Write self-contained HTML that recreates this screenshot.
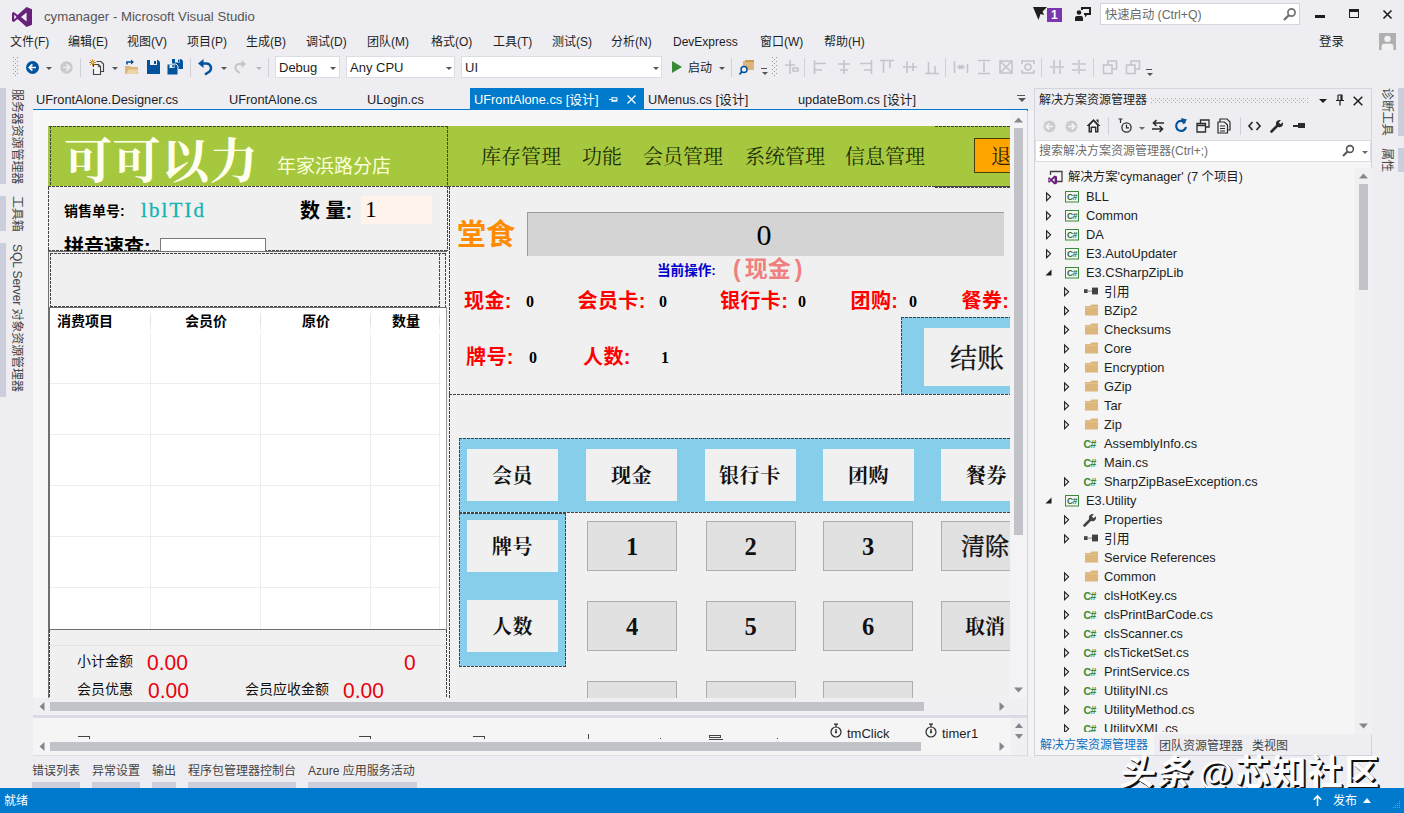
<!DOCTYPE html>
<html lang="zh-CN">
<head>
<meta charset="utf-8">
<title>cymanager - Microsoft Visual Studio</title>
<style>
*{box-sizing:border-box;margin:0;padding:0}
html,body{width:1404px;height:813px;overflow:hidden;background:#eeeef2}
body{font-family:"Liberation Sans","Noto Sans CJK SC",sans-serif;font-size:12px;color:#1e1e1e;position:relative}
.a{position:absolute;white-space:nowrap}
.sf{font-family:"Liberation Serif","Noto Serif CJK SC",serif}
.t{position:absolute;white-space:nowrap;line-height:1;transform:translateY(-50%)}
.b{font-weight:bold}
svg{position:absolute;overflow:visible}
/* ---------- title / menu / toolbar ---------- */
#title{left:44px;top:16.7px;font-size:13.2px;color:#555}
.menu{top:42px;font-size:12px;color:#1e1e1e}
.sep{position:absolute;width:1px;background:#cfd0d8;top:58px;height:19px}
.combo{position:absolute;top:56px;height:22px;background:#fff;border:1px solid #dcdde3}
.combo span{position:absolute;left:3px;top:3px;font-size:13px;color:#1e1e1e;line-height:15px}
.dn{position:absolute;width:0;height:0;border-left:3px solid transparent;border-right:3px solid transparent;border-top:3px solid #6a6a6a;margin:0.5px 0 0 0.5px}
/* ---------- doc tabs ---------- */
.tab{top:99.5px;font-size:12.8px;color:#1e1e1e}
/* ---------- designer ---------- */
#des{position:absolute;left:33px;top:110px;width:993px;height:605px;background:#f5f5f5}
#view{position:absolute;left:0;top:0;width:977px;height:588px;overflow:hidden;background:#f7f7f7}
#form{position:absolute;left:15px;top:16px;width:1100px;height:700px;background:#f0f0f0}
.dash{position:absolute;border:1px dashed #555}
.red{color:#f00;font-weight:bold;font-size:20px;letter-spacing:0.4px}
.val{font-family:"Liberation Serif","Noto Serif CJK SC",serif;font-size:16px;color:#000;font-weight:bold}
.pbtn{position:absolute;background:#f0f0f0;font-family:"Liberation Serif","Noto Serif CJK SC",serif;font-weight:bold;font-size:20px;color:#111;text-align:center}
.nbtn{position:absolute;background:#e1e1e1;border:1px solid #adadad;font-family:"Liberation Serif","Noto Serif CJK SC",serif;font-weight:bold;font-size:24.5px;color:#111;text-align:center;width:90px;height:50px;line-height:50px}

.hd{position:absolute;height:1px;background:repeating-linear-gradient(90deg,#444 0 3px,transparent 3px 4px)}
.vd{position:absolute;width:1px;background:repeating-linear-gradient(180deg,#444 0 3px,transparent 3px 4px)}
.sky{position:absolute;background:#87ceeb}
/* ---------- solution explorer ---------- */
#sol{position:absolute;left:1034px;top:90px;width:338px;height:644px}
.tr{position:absolute;left:0;height:19px;font-size:12.8px;color:#1e1e1e;white-space:nowrap;line-height:19px}

.vt{writing-mode:vertical-rl;text-orientation:sideways;font-size:12px;color:#444;line-height:14px;letter-spacing:-0.1px}
#wm{font-size:35px;font-weight:700;color:#fdfdfd;letter-spacing:0.6px;text-shadow:1px 1px 0 #111,2px 2px 0 #111,0 0 1px #bbb}
.gs{font-family:"Liberation Serif","Noto Serif CJK SC",serif;font-size:500px}
.gw{font-family:"Liberation Sans","Noto Sans CJK SC",sans-serif;font-size:500px;font-weight:bold}
</style>
</head>
<body>
<!-- TITLE BAR -->
<svg style="left:11px;top:6px" width="22" height="22" viewBox="0 0 22 22"><path d="M15.5 1 L21 3.3 V18.7 L15.5 21 L6.6 12.9 L2.8 15.9 L1 15 V7 L2.8 6.1 L6.6 9.1 Z M3.2 8.6 V13.4 L5.6 11 Z M10 11 L15.6 15.4 V6.6 Z" fill="#68217a" fill-rule="evenodd"/></svg>
<div class="t" id="title">cymanager - Microsoft Visual Studio</div>
<svg style="left:1032.5px;top:7px" width="14" height="13" viewBox="0 0 14 13"><path d="M0 0 H14 L9.5 4.5 L11 8 L7.5 7 L5.5 13 Z" fill="#1e1e1e"/></svg>
<div class="a" style="left:1047px;top:7.5px;width:14.5px;height:14px;background:#7a35b0;color:#fff;font-size:12px;font-weight:bold;text-align:center;line-height:15px">1</div>
<svg style="left:1075px;top:7px" width="16" height="15" viewBox="0 0 16 15"><path d="M6 0 H16 V8 H12 L10 10.5 V8 H9 V6 H14 V2 H8 V3 H6 Z" fill="#1e1e1e"/><circle cx="4" cy="5.5" r="2.3" fill="#1e1e1e"/><path d="M0 14 V11 Q0 9 2 9 H6 Q8 9 8 11 V14 Z" fill="#1e1e1e"/></svg>
<div class="a" style="left:1100px;top:3px;width:200px;height:22px;background:#fff;border:1px solid #d4d5de"></div>
<div class="t" style="left:1105px;top:15px;font-size:12.3px;color:#6a6a6a">快速启动 (Ctrl+Q)</div>
<svg style="left:1282px;top:7px" width="15" height="15" viewBox="0 0 15 15"><circle cx="9.5" cy="5.5" r="3.6" fill="none" stroke="#717171" stroke-width="1.7"/><path d="M6.8 8.2 L2 13" stroke="#717171" stroke-width="2.3"/></svg>
<div class="a" style="left:1315px;top:15px;width:10px;height:3px;background:#1e1e1e"></div>
<div class="a" style="left:1349px;top:9px;width:10px;height:9px;border:1px solid #1e1e1e;border-top-width:3px"></div>
<svg style="left:1382.5px;top:9.5px" width="9" height="9" viewBox="0 0 9 9"><path d="M0.5 0.5 L8.5 8.5 M8.5 0.5 L0.5 8.5" stroke="#1e1e1e" stroke-width="1.6"/></svg>
<div class="t" style="left:1319px;top:42px;font-size:12.5px">登录</div>
<svg style="left:1379px;top:33px" width="17" height="17" viewBox="0 0 16 16"><rect width="16" height="16" fill="#b0b0b0"/><circle cx="8" cy="5.5" r="3" fill="#f2f2f2"/><path d="M2.5 16 V12.5 Q2.5 10 5 10 H11 Q13.5 10 13.5 12.5 V16 Z" fill="#f2f2f2"/></svg>
<!-- MENU -->
<div class="t menu" style="left:10px">文件(F)</div>
<div class="t menu" style="left:68px">编辑(E)</div>
<div class="t menu" style="left:127px">视图(V)</div>
<div class="t menu" style="left:187px">项目(P)</div>
<div class="t menu" style="left:246px">生成(B)</div>
<div class="t menu" style="left:306px">调试(D)</div>
<div class="t menu" style="left:367px">团队(M)</div>
<div class="t menu" style="left:431px">格式(O)</div>
<div class="t menu" style="left:493px">工具(T)</div>
<div class="t menu" style="left:552px">测试(S)</div>
<div class="t menu" style="left:611px">分析(N)</div>
<div class="t menu" style="left:673px">DevExpress</div>
<div class="t menu" style="left:760px">窗口(W)</div>
<div class="t menu" style="left:824px">帮助(H)</div>

<!-- TOOLBAR -->
<svg style="left:13px;top:57px" width="5" height="20"><defs><pattern id="g13" width="4" height="4" patternUnits="userSpaceOnUse"><rect x="0" y="0" width="1" height="1" fill="#999"/><rect x="2" y="2" width="1" height="1" fill="#999"/></pattern></defs><rect width="5" height="20" fill="url(#g13)"/></svg>
<svg style="left:25.5px;top:60.5px" width="13" height="13" viewBox="0 0 13 13"><circle cx="6.5" cy="6.5" r="6.5" fill="#00539c"/><path d="M10 6.5 H3.6 M6.4 3.4 L3.3 6.5 L6.4 9.6" fill="none" stroke="#fff" stroke-width="1.7"/></svg>
<div class="dn" style="left:45px;top:66px;border-top-color:#555"></div>
<svg style="left:60px;top:60.5px" width="13" height="13" viewBox="0 0 13 13"><circle cx="6.5" cy="6.5" r="6.2" fill="#c9c9ce"/><path d="M3 6.5 H9.4 M6.6 3.4 L9.7 6.5 L6.6 9.6" fill="none" stroke="#eeeef2" stroke-width="1.7"/></svg>
<div class="sep" style="left:80px"></div>
<svg style="left:89px;top:59px" width="16" height="16" viewBox="0 0 16 16"><path d="M7.5 2.5 H12 L14.5 5 V12.5 H12" fill="none" stroke="#424242" stroke-width="1.1"/><path d="M4.5 8 V5.5 H9.5 L11.5 7.5 V15.5 H4.5 V10" fill="#f5f5f5" stroke="#424242" stroke-width="1.1"/><path d="M9.3 5.5 V7.7 H11.5" fill="none" stroke="#424242" stroke-width="0.9"/><path d="M3.5 0.3 V6.7 M0.3 3.5 H6.7 M1.3 1.3 L5.7 5.7 M5.7 1.3 L1.3 5.7" stroke="#c27d1a" stroke-width="1"/><circle cx="3.5" cy="3.5" r="1.2" fill="#f0c060"/></svg>
<div class="dn" style="left:111px;top:66px;border-top-color:#555"></div>
<svg style="left:123px;top:59px" width="16" height="16" viewBox="0 0 16 16"><path d="M2 7 H7 L8 8 H15 V15 H2 Z" fill="#dcb67a"/><path d="M3.5 15 L5.5 10.5 H15.5 L14 15 Z" fill="#efd5a5"/><path d="M4 5.5 V3 H9" fill="none" stroke="#00539c" stroke-width="1.6"/><path d="M8 0.5 L11 3 L8 5.5 Z" fill="#00539c"/></svg>
<svg style="left:147px;top:60px" width="13" height="14" viewBox="0 0 13 14"><path d="M0 0 H11 L13 2 V14 H0 Z" fill="#00539c"/><rect x="3" y="0" width="7" height="5" fill="#eeeef2"/><rect x="7" y="1" width="2" height="3" fill="#00539c"/><rect x="2.5" y="8" width="8" height="6" fill="#00539c"/></svg>
<svg style="left:167px;top:59px" width="16" height="16" viewBox="0 0 16 16"><path d="M5 0 H14 L16 2 V10 H5 Z" fill="#00539c"/><rect x="8" y="0" width="5" height="3.5" fill="#eeeef2"/><rect x="11" y="0.6" width="1.5" height="2.3" fill="#00539c"/><path d="M0 5 H9 L11 7 V16 H0 Z" fill="#00539c" stroke="#eeeef2" stroke-width="1"/><rect x="2.5" y="5.5" width="5" height="3.5" fill="#eeeef2"/><rect x="5.3" y="6" width="1.5" height="2.3" fill="#00539c"/></svg>
<div class="sep" style="left:190px"></div>
<svg style="left:198px;top:59px" width="15" height="16" viewBox="0 0 15 16"><path d="M3.5 4.5 H8.5 A4.6 4.6 0 0 1 11.5 12.5 L7 15.5" fill="none" stroke="#00539c" stroke-width="2.4"/><path d="M0 4.5 L5.5 0 V9 Z" fill="#00539c"/></svg>
<div class="dn" style="left:220px;top:66px;border-top-color:#555"></div>
<svg style="left:233px;top:60px" width="13" height="14" viewBox="0 0 13 14"><path d="M10 4 H6 A3.8 3.8 0 0 0 3.5 10.5 L7 13" fill="none" stroke="#c3c3c8" stroke-width="2"/><path d="M13 4 L8.5 0 V8 Z" fill="#c3c3c8"/></svg>
<div class="dn" style="left:255px;top:66px;border-top-color:#b5b5bb"></div>
<div class="sep" style="left:268px"></div>
<div class="combo" style="left:275px;width:65px"><span>Debug</span></div><div class="dn" style="left:329px;top:66px;border-top-color:#555"></div>
<div class="combo" style="left:346px;width:109px"><span>Any CPU</span></div><div class="dn" style="left:445px;top:66px;border-top-color:#555"></div>
<div class="combo" style="left:461px;width:201px"><span>UI</span></div><div class="dn" style="left:652px;top:66px;border-top-color:#555"></div>
<svg style="left:672px;top:61px" width="10" height="12" viewBox="0 0 10 12"><path d="M0 0 L10 6 L0 12 Z" fill="#388a34"/></svg>
<div class="t" style="left:688px;top:67.6px;font-size:12px">启动</div>
<div class="dn" style="left:718px;top:66px;border-top-color:#555"></div>
<div class="sep" style="left:731px"></div>
<svg style="left:739px;top:59px" width="16" height="16" viewBox="0 0 16 16"><rect x="4" y="2" width="11" height="9" fill="#dcb67a"/><rect x="6" y="1" width="9" height="2" fill="#c89b4e"/><circle cx="5" cy="10.5" r="3" fill="#eeeef2" stroke="#00539c" stroke-width="1.5"/><path d="M3 12.5 L0.5 15.5" stroke="#00539c" stroke-width="1.8"/></svg>
<div class="a" style="left:761px;top:68px;width:6px;height:1px;background:#555"></div><div class="dn" style="left:761px;top:71px;border-top-color:#555"></div>
<svg style="left:772px;top:57px" width="5" height="20"><defs><pattern id="g772" width="4" height="4" patternUnits="userSpaceOnUse"><rect x="0" y="0" width="1" height="1" fill="#999"/><rect x="2" y="2" width="1" height="1" fill="#999"/></pattern></defs><rect width="5" height="20" fill="url(#g772)"/></svg>
<svg style="left:784px;top:59px" width="16" height="16" viewBox="0 0 16 16" fill="none" stroke="#c3c4cc" stroke-width="1.6"><path d="M6 1 V15 M1 6 H11 M9 9 H14 V12 H9 Z"/></svg>
<div class="sep" style="left:804px"></div>
<svg style="left:813px;top:59px" width="16" height="16" viewBox="0 0 16 16" fill="none" stroke="#c3c4cc" stroke-width="1.6"><path d="M1.5 1 V15 M1.5 4.5 H13 M1.5 11 H9"/></svg>
<svg style="left:836px;top:59px" width="16" height="16" viewBox="0 0 16 16" fill="none" stroke="#c3c4cc" stroke-width="1.6"><path d="M8 1 V15 M2 5 H14 M4 11 H12"/></svg>
<svg style="left:857px;top:59px" width="16" height="16" viewBox="0 0 16 16" fill="none" stroke="#c3c4cc" stroke-width="1.6"><path d="M14.5 1 V15 M3 4.5 H14.5 M7 11 H14.5"/></svg>
<svg style="left:879px;top:59px" width="16" height="16" viewBox="0 0 16 16" fill="none" stroke="#c3c4cc" stroke-width="1.6"><path d="M1 1.5 H15 M4.5 1.5 V14 M11 1.5 V9"/></svg>
<svg style="left:902px;top:59px" width="16" height="16" viewBox="0 0 16 16" fill="none" stroke="#c3c4cc" stroke-width="1.6"><path d="M1 8 H15 M5 2 V14 M11 4 V12"/></svg>
<svg style="left:924px;top:59px" width="16" height="16" viewBox="0 0 16 16" fill="none" stroke="#c3c4cc" stroke-width="1.6"><path d="M1 14.5 H15 M4.5 3 V14.5 M11 7 V14.5"/></svg>
<div class="sep" style="left:945px"></div>
<svg style="left:953px;top:59px" width="16" height="16" viewBox="0 0 16 16" fill="none" stroke="#c3c4cc" stroke-width="1.6"><path d="M1.5 2 V14 M14.5 5 V14 M4 8 H12 M6 6 L10 10 M10 6 L6 10"/></svg>
<svg style="left:976px;top:59px" width="16" height="16" viewBox="0 0 16 16" fill="none" stroke="#c3c4cc" stroke-width="1.6"><path d="M2 1.5 H14 M2 14.5 H14 M8 3 V13"/></svg>
<svg style="left:998px;top:59px" width="16" height="16" viewBox="0 0 16 16" fill="none" stroke="#c3c4cc" stroke-width="1.6"><path d="M2 2 H14 V14 H2 Z M2 2 L14 14 M14 2 L2 14"/></svg>
<svg style="left:1020px;top:59px" width="16" height="16" viewBox="0 0 16 16" fill="none" stroke="#c3c4cc" stroke-width="1.6"><circle cx="8" cy="8" r="3"/><path d="M2 5 V2 H14 V5 M2 11 V14 H14 V11"/></svg>
<div class="sep" style="left:1041px"></div>
<svg style="left:1049px;top:59px" width="16" height="16" viewBox="0 0 16 16" fill="none" stroke="#c3c4cc" stroke-width="1.6"><path d="M5 1 V15 M11 1 V15 M1 8 H4 M6 8 H10 M12 8 H15"/></svg>
<svg style="left:1071px;top:59px" width="16" height="16" viewBox="0 0 16 16" fill="none" stroke="#c3c4cc" stroke-width="1.6"><path d="M1 5 H15 M1 11 H15 M8 1 V4 M8 6 V10 M8 12 V15"/></svg>
<div class="sep" style="left:1093px"></div>
<svg style="left:1102px;top:59px" width="16" height="16" viewBox="0 0 16 16" fill="none" stroke="#c3c4cc" stroke-width="1.6"><path d="M1.5 6 H10 V14.5 H1.5 Z M6 6 V2 H14.5 V10 H10"/></svg>
<svg style="left:1125px;top:59px" width="16" height="16" viewBox="0 0 16 16" fill="none" stroke="#c3c4cc" stroke-width="1.6"><path d="M1.5 6 H10 V14.5 H1.5 Z M6 6 V2 H14.5 V10 H10"/></svg>
<div class="a" style="left:1146px;top:69px;width:6px;height:1px;background:#555"></div><div class="dn" style="left:1146px;top:72px;border-top-color:#555"></div>
<!-- DOC TABS -->
<div class="a" style="left:33px;top:109px;width:995px;height:2px;background:#007acc"></div>
<div class="a" style="left:470px;top:88px;width:174px;height:22px;background:#007acc"></div>
<div class="t tab" style="left:36px;">UFrontAlone.Designer.cs</div>
<div class="t tab" style="left:229px;">UFrontAlone.cs</div>
<div class="t tab" style="left:367px;">ULogin.cs</div>
<div class="t tab" style="left:474px;color:#fff">UFrontAlone.cs [设计]</div>
<div class="t tab" style="left:648px;">UMenus.cs [设计]</div>
<div class="t tab" style="left:798px;">updateBom.cs [设计]</div>
<svg style="left:609px;top:95px" width="9" height="9" viewBox="0 0 9 9"><path d="M0 4.5 H3 M3 2 V7 M3 2.8 H8 M3 5.4 H8 M3 6.2 H8 M8 2.8 V6.2" stroke="#fff" stroke-width="1" fill="none"/></svg>
<svg style="left:627px;top:95px" width="9" height="9" viewBox="0 0 9 9"><path d="M0.5 0.5 L8.5 8.5 M8.5 0.5 L0.5 8.5" stroke="#fff" stroke-width="1.3"/></svg>
<div class="a" style="left:1017px;top:95px;width:8px;height:1px;background:#555"></div><div class="dn" style="left:1017px;top:97px;border-width:4px 4px 0 4px;border-top-color:#555"></div>
<!-- LEFT STRIP -->
<div class="a" style="left:0;top:88px;width:6px;height:96px;background:#ccceDB"></div>
<div class="a" style="left:0;top:196px;width:6px;height:35px;background:#ccceDB"></div>
<div class="a" style="left:0;top:243px;width:6px;height:154px;background:#ccceDB"></div>
<div class="a vt" style="left:10px;top:88.5px">服务器资源管理器</div>
<div class="a vt" style="left:10px;top:196px">工具箱</div>
<div class="a vt" style="left:10px;top:244px">SQL Server 对象资源管理器</div>
<!-- DESIGNER -->
<div id="des"><div id="view"><div id="form">
<div class="a" style="left:0px;top:0px;width:1100px;height:60px;background:#a6c83f"></div>
<svg role="img" aria-label="可可以力" style="left:15.5px;top:9.5px" width="194.4" height="48" viewBox="0 -440 2025 500" fill="#fffff0"><title>可可以力</title><text class="gs" x="0" y="0" font-weight="bold" letter-spacing="6.25">可可以力</text></svg>
<div class="t " style="left:229px;top:40px;font-size:19px;color:#fbffd8">年家浜路分店</div>
<svg role="img" aria-label="库存管理" style="left:433px;top:20px" width="80" height="20" viewBox="0 -440 2000 500" fill="#1c2b06"><title>库存管理</title><text class="gs" x="0" y="0">库存管理</text></svg>
<svg role="img" aria-label="功能" style="left:534px;top:20px" width="40" height="20" viewBox="0 -440 1000 500" fill="#1c2b06"><title>功能</title><text class="gs" x="0" y="0">功能</text></svg>
<svg role="img" aria-label="会员管理" style="left:595px;top:20px" width="80" height="20" viewBox="0 -440 2000 500" fill="#1c2b06"><title>会员管理</title><text class="gs" x="0" y="0">会员管理</text></svg>
<svg role="img" aria-label="系统管理" style="left:697px;top:20px" width="80" height="20" viewBox="0 -440 2000 500" fill="#1c2b06"><title>系统管理</title><text class="gs" x="0" y="0">系统管理</text></svg>
<svg role="img" aria-label="信息管理" style="left:797px;top:20px" width="80" height="20" viewBox="0 -440 2000 500" fill="#1c2b06"><title>信息管理</title><text class="gs" x="0" y="0">信息管理</text></svg>
<div class="a" style="left:926px;top:12px;width:120px;height:35px;background:#ffa500;border:1px solid #4a3a10"></div>
<svg role="img" aria-label="退" style="left:943px;top:19.5px" width="20" height="20" viewBox="0 -440 500 500" fill="#2a2000"><title>退</title><text class="gs" x="0" y="0">退</text></svg>
<div class="hd" style="left:1px;top:0px;width:399px"></div><div class="vd" style="left:2px;top:0px;height:60px"></div><div class="vd" style="left:399px;top:0px;height:125px"></div><div class="hd" style="left:0px;top:60px;width:962px"></div>
<div class="hd" style="left:887px;top:0px;width:200px"></div><div class="hd" style="left:887px;top:60px;width:200px"></div><div class="hd" style="left:887px;top:61px;width:200px"></div>
<div class="vd" style="left:0px;top:61px;height:64px"></div><div class="hd" style="left:0px;top:124px;width:399px"></div>
<div class="t " style="left:16px;top:85px;font-size:14px;font-weight:bold;color:#000">销售单号:</div>
<div class="t sf" style="left:93px;top:84px;font-size:21px;color:#12b4b0;letter-spacing:2.1px;-webkit-text-stroke:0.3px #12b4b0">lblTId</div>
<div class="t " style="left:252px;top:85px;font-size:20px;font-weight:bold;color:#000">数 量:</div>
<div class="a" style="left:313px;top:70px;width:71px;height:28px;background:#fff3ec"></div>
<div class="t sf" style="left:317px;top:83.5px;font-size:23.5px;color:#000">1</div>
<div class="a" style="left:1px;top:105px;width:398px;height:20px;overflow:hidden"><div class="t" style="left:15px;top:16px;font-size:20px;font-weight:bold;color:#000">拼音速查:</div><div class="a" style="left:111px;top:7px;width:106px;height:20px;background:#fff;border:1px solid #7a7a7a"></div></div>
<div class="a" style="left:0px;top:125px;width:399px;height:1px;background:#707070"></div><div class="a" style="left:0px;top:125px;width:1px;height:460px;background:#707070"></div>
<div class="hd" style="left:2px;top:127px;width:396px"></div><div class="vd" style="left:2px;top:127px;height:54px"></div><div class="vd" style="left:397px;top:127px;height:54px"></div><div class="vd" style="left:391px;top:127px;height:54px"></div><div class="hd" style="left:2px;top:180px;width:390px"></div>
<div class="a" style="left:1px;top:181px;width:398px;height:323px;background:#fff;border:1px solid #6d6d6d;border-right-color:#9a9a9a"><div class="a" style="left:100px;top:0;width:1px;height:321px;background:#ededed"></div><div class="a" style="left:100px;top:0;width:1px;height:25px;background:linear-gradient(#fff,#dcdcdc,#fff)"></div><div class="a" style="left:210px;top:0;width:1px;height:321px;background:#ededed"></div><div class="a" style="left:210px;top:0;width:1px;height:25px;background:linear-gradient(#fff,#dcdcdc,#fff)"></div><div class="a" style="left:320px;top:0;width:1px;height:321px;background:#ededed"></div><div class="a" style="left:320px;top:0;width:1px;height:25px;background:linear-gradient(#fff,#dcdcdc,#fff)"></div><div class="a" style="left:389px;top:0;width:1px;height:321px;background:#ededed"></div><div class="a" style="left:389px;top:0;width:1px;height:25px;background:linear-gradient(#fff,#dcdcdc,#fff)"></div><div class="a" style="left:0;top:75px;width:391px;height:1px;background:#ededed"></div><div class="a" style="left:0;top:126px;width:391px;height:1px;background:#ededed"></div><div class="a" style="left:0;top:177px;width:391px;height:1px;background:#ededed"></div><div class="a" style="left:0;top:228px;width:391px;height:1px;background:#ededed"></div><div class="a" style="left:0;top:279px;width:391px;height:1px;background:#ededed"></div><div class="t" style="left:7px;top:13px;font-size:14px;font-weight:bold;color:#000">消费项目</div><div class="t" style="left:135px;top:13px;font-size:14px;font-weight:bold;color:#000">会员价</div><div class="t" style="left:252px;top:13px;font-size:14px;font-weight:bold;color:#000">原价</div><div class="t" style="left:342px;top:13px;font-size:14px;font-weight:bold;color:#000">数量</div></div>
<div class="a" style="left:3px;top:519px;width:395px;height:1px;background:#e3e3e3"></div>
<div class="t " style="left:29px;top:535px;font-size:14px;color:#111">小计金额</div>
<div class="t " style="left:99px;top:535.5px;font-size:21px;color:#e8000b;transform:translateY(-50%) scaleY(1.06)">0.00</div>
<div class="t " style="left:356px;top:535.5px;font-size:21px;color:#e8000b;transform:translateY(-50%) scaleY(1.06)">0</div>
<div class="t " style="left:29px;top:562.5px;font-size:14px;color:#111">会员优惠</div>
<div class="t " style="left:100px;top:563.5px;font-size:21px;color:#e8000b;transform:translateY(-50%) scaleY(1.06)">0.00</div>
<div class="t " style="left:197px;top:562.5px;font-size:14px;color:#111">会员应收金额</div>
<div class="t " style="left:295px;top:563.5px;font-size:21px;color:#e8000b;transform:translateY(-50%) scaleY(1.06)">0.00</div>
<div class="vd" style="left:398px;top:504px;height:70px"></div><div class="vd" style="left:1px;top:504px;height:70px"></div>
<div class="vd" style="left:401px;top:61px;height:520px"></div>
<div class="hd" style="left:401px;top:268px;width:453px"></div>
<div class="t " style="left:409px;top:109px;font-size:29px;font-weight:bold;color:#ff8c00">堂食</div>
<div class="a" style="left:479px;top:86px;width:477px;height:44px;background:#d4d4d4;border-left:1px solid #9c9c9c;border-top:1px solid #9c9c9c"></div>
<div class="t sf" style="left:708.5px;top:109px;font-size:30px;color:#000">0</div>
<div class="t " style="left:609px;top:145px;font-size:13.6px;font-weight:bold;color:#0000cd">当前操作:</div>
<div class="t " style="left:685px;top:143px;font-size:23px;font-weight:bold;color:#f08080"><span style="margin-right:4px">(</span>现金<span style="margin-left:4px">)</span></div>
<div class="t red" style="left:416px;top:175px;">现金:</div>
<div class="t red" style="left:529.5px;top:175px;">会员卡:</div>
<div class="t red" style="left:672px;top:175px;">银行卡:</div>
<div class="t red" style="left:802.5px;top:175px;">团购:</div>
<div class="t red" style="left:913.5px;top:175px;">餐券:</div>
<div class="t val" style="left:478px;top:176px;">0</div>
<div class="t val" style="left:611px;top:176px;">0</div>
<div class="t val" style="left:750px;top:176px;">0</div>
<div class="t val" style="left:861px;top:176px;">0</div>
<div class="t red" style="left:418px;top:231px;">牌号:</div>
<div class="t red" style="left:535px;top:231px;">人数:</div>
<div class="t val" style="left:481px;top:232px;">0</div><div class="t val" style="left:613px;top:232px;">1</div>
<div class="sky" style="left:853px;top:191px;width:200px;height:77px"></div>
<div class="hd" style="left:853px;top:191px;width:200px"></div><div class="vd" style="left:853px;top:191px;height:77px"></div><div class="hd" style="left:853px;top:268px;width:200px"></div>
<div class="a" style="left:876px;top:202px;width:160px;height:58px;background:#f0f0f0"></div>
<svg role="img" aria-label="结账" style="left:901.5px;top:217.5px" width="54" height="27" viewBox="0 -440 1000 500" fill="#111" stroke="#111" stroke-width="5.6" stroke-linejoin="round"><title>结账</title><text class="gs" x="0" y="0">结账</text></svg>
<div class="sky" style="left:411px;top:312px;width:650px;height:74px"></div>
<div class="hd" style="left:411px;top:312px;width:650px"></div><div class="vd" style="left:411px;top:312px;height:75px"></div><div class="hd" style="left:411px;top:386px;width:650px"></div>
<div class="a" style="left:419px;top:323px;width:91px;height:52px;background:#f0f0f0"></div><svg role="img" aria-label="会员" style="left:444.2px;top:339px" width="41.2" height="20" viewBox="0 -440 1030 500" fill="#111"><title>会员</title><text class="gs" x="0" y="0" font-weight="bold" letter-spacing="15">会员</text></svg>
<div class="a" style="left:538px;top:323px;width:91px;height:52px;background:#f0f0f0"></div><svg role="img" aria-label="现金" style="left:563.2px;top:339px" width="41.2" height="20" viewBox="0 -440 1030 500" fill="#111"><title>现金</title><text class="gs" x="0" y="0" font-weight="bold" letter-spacing="15">现金</text></svg>
<div class="a" style="left:656.5px;top:323px;width:91px;height:52px;background:#f0f0f0"></div><svg role="img" aria-label="银行卡" style="left:671.4px;top:339px" width="61.8" height="20" viewBox="0 -440 1545 500" fill="#111"><title>银行卡</title><text class="gs" x="0" y="0" font-weight="bold" letter-spacing="15">银行卡</text></svg>
<div class="a" style="left:774.5px;top:323px;width:91px;height:52px;background:#f0f0f0"></div><svg role="img" aria-label="团购" style="left:799.7px;top:339px" width="41.2" height="20" viewBox="0 -440 1030 500" fill="#111"><title>团购</title><text class="gs" x="0" y="0" font-weight="bold" letter-spacing="15">团购</text></svg>
<div class="a" style="left:893px;top:323px;width:91px;height:52px;background:#f0f0f0"></div><svg role="img" aria-label="餐券" style="left:918.2px;top:339px" width="41.2" height="20" viewBox="0 -440 1030 500" fill="#111"><title>餐券</title><text class="gs" x="0" y="0" font-weight="bold" letter-spacing="15">餐券</text></svg>
<div class="sky" style="left:411px;top:387px;width:107px;height:153px"></div>
<div class="hd" style="left:411px;top:387px;width:107px"></div><div class="hd" style="left:411px;top:540px;width:107px"></div><div class="vd" style="left:411px;top:387px;height:154px"></div><div class="vd" style="left:517px;top:387px;height:154px"></div>
<div class="a" style="left:419px;top:394px;width:91px;height:52px;background:#f0f0f0"></div><svg role="img" aria-label="牌号" style="left:444.2px;top:410px" width="41.2" height="20" viewBox="0 -440 1030 500" fill="#111"><title>牌号</title><text class="gs" x="0" y="0" font-weight="bold" letter-spacing="15">牌号</text></svg>
<div class="a" style="left:419px;top:474px;width:91px;height:52px;background:#f0f0f0"></div><svg role="img" aria-label="人数" style="left:444.2px;top:490px" width="41.2" height="20" viewBox="0 -440 1030 500" fill="#111"><title>人数</title><text class="gs" x="0" y="0" font-weight="bold" letter-spacing="15">人数</text></svg>
<div class="nbtn" style="left:539px;top:395px">1</div>
<div class="nbtn" style="left:657.5px;top:395px">2</div>
<div class="nbtn" style="left:775px;top:395px">3</div>
<div class="nbtn" style="left:893px;top:395px"></div>
<svg role="img" aria-label="清除" style="left:912.5px;top:408px" width="48" height="24" viewBox="0 -440 1000 500" fill="#111" stroke="#111" stroke-width="8.3" stroke-linejoin="round"><title>清除</title><text class="gs" x="0" y="0">清除</text></svg>
<div class="nbtn" style="left:539px;top:475px">4</div>
<div class="nbtn" style="left:657.5px;top:475px">5</div>
<div class="nbtn" style="left:775px;top:475px">6</div>
<div class="nbtn" style="left:893px;top:475px"></div>
<svg role="img" aria-label="取消" style="left:916.5px;top:490px" width="40" height="20" viewBox="0 -440 1000 500" fill="#111"><title>取消</title><text class="gs" x="0" y="0" font-weight="bold">取消</text></svg>
<div class="nbtn" style="left:539px;top:555px"></div>
<div class="nbtn" style="left:657.5px;top:555px"></div>
<div class="nbtn" style="left:775px;top:555px"></div>
</div></div>
<div class="a" style="left:977px;top:0;width:17px;height:588px;background:#f3f3f6"></div>
<svg style="left:981px;top:7px" width="9" height="6"><path d="M0 5.5 L4.5 0.5 L9 5.5 Z" fill="#85868f"/></svg>
<div class="a" style="left:981px;top:18px;width:9px;height:407px;background:#c2c3c9"></div>
<svg style="left:981px;top:577px" width="9" height="6"><path d="M0 0.5 L4.5 5.5 L9 0.5 Z" fill="#85868f"/></svg>
<div class="a" style="left:0;top:588px;width:993px;height:17px;background:#f0f0f2"></div>
<svg style="left:6px;top:592px" width="6" height="9"><path d="M5.5 0 L0.5 4.5 L5.5 9 Z" fill="#85868f"/></svg>
<div class="a" style="left:17px;top:592px;width:874px;height:9px;background:#c2c3c9"></div>
<svg style="left:966px;top:592px" width="6" height="9"><path d="M0.5 0 L5.5 4.5 L0.5 9 Z" fill="#85868f"/></svg>
</div>
<!-- TRAY -->
<div class="a" style="left:33px;top:715px;width:995px;height:3px;background:#d9dae3"></div>
<div class="a" id="tray" style="left:33px;top:718px;width:995px;height:37px;background:#f5f5f5;overflow:hidden">
<div class="a" style="left:978px;top:0;width:17px;height:37px;background:#f0f0f2"></div>
<svg style="left:982px;top:5px" width="8" height="5"><path d="M0 5 L4 0 L8 5 Z" fill="#85868f"/></svg>
<svg style="left:982px;top:16px" width="8" height="5"><path d="M0 0 L4 5 L8 0 Z" fill="#85868f"/></svg>
<svg style="left:6px;top:24px" width="6" height="9"><path d="M5.5 0 L0.5 4.5 L5.5 9 Z" fill="#85868f"/></svg>
<div class="a" style="left:17px;top:24px;width:871px;height:9px;background:#c2c3c9"></div>
<svg style="left:966px;top:24px" width="6" height="9"><path d="M0.5 0 L5.5 4.5 L0.5 9 Z" fill="#85868f"/></svg>
<div class="a" style="left:45px;top:18px;width:12px;height:1px;background:#444"></div><div class="a" style="left:56px;top:18px;width:1px;height:3px;background:#444"></div>
<div class="a" style="left:326px;top:18px;width:12px;height:1px;background:#444"></div><div class="a" style="left:337px;top:18px;width:1px;height:3px;background:#444"></div>
<div class="a" style="left:440px;top:18px;width:12px;height:1px;background:#444"></div><div class="a" style="left:451px;top:18px;width:1px;height:3px;background:#444"></div>
<div class="a" style="left:555px;top:16px;width:1px;height:5px;background:#444"></div>
<div class="a" style="left:627px;top:20px;width:1px;height:1px;background:#444"></div>
<div class="a" style="left:676px;top:17px;width:12px;height:3px;border:1px solid #444"></div><div class="a" style="left:676px;top:21px;width:14px;height:1px;background:#444"></div>
<div class="a" style="left:744px;top:20px;width:1px;height:1px;background:#444"></div>
<svg style="left:797px;top:5px" width="12" height="15" viewBox="0 0 12 15"><circle cx="6" cy="9" r="5" fill="none" stroke="#2b2b2b" stroke-width="1.2"/><path d="M4 1.2 H8 M6 1.4 V4 M6 6 V9" stroke="#2b2b2b" stroke-width="1.3" fill="none"/><circle cx="6" cy="9.3" r="1.1" fill="#2b2b2b"/></svg><div class="t" style="left:814px;top:15px;font-size:13px">tmClick</div>
<svg style="left:892px;top:5px" width="12" height="15" viewBox="0 0 12 15"><circle cx="6" cy="9" r="5" fill="none" stroke="#2b2b2b" stroke-width="1.2"/><path d="M4 1.2 H8 M6 1.4 V4 M6 6 V9" stroke="#2b2b2b" stroke-width="1.3" fill="none"/><circle cx="6" cy="9.3" r="1.1" fill="#2b2b2b"/></svg><div class="t" style="left:909px;top:15px;font-size:13px">timer1</div>
</div>
<div class="a" style="left:33px;top:755px;width:995px;height:1px;background:#dddde3"></div>
<!-- BOTTOM TABS -->
<div class="t" style="left:32px;top:771px;font-size:12px;color:#444">错误列表</div>
<div class="a" style="left:32px;top:782px;width:48px;height:6px;background:#ccceDB"></div>
<div class="t" style="left:92px;top:771px;font-size:12px;color:#444">异常设置</div>
<div class="a" style="left:92px;top:782px;width:48px;height:6px;background:#ccceDB"></div>
<div class="t" style="left:152px;top:771px;font-size:12px;color:#444">输出</div>
<div class="a" style="left:152px;top:782px;width:24px;height:6px;background:#ccceDB"></div>
<div class="t" style="left:188px;top:771px;font-size:12px;color:#444">程序包管理器控制台</div>
<div class="a" style="left:188px;top:782px;width:108px;height:6px;background:#ccceDB"></div>
<div class="t" style="left:308px;top:771px;font-size:12px;color:#444">Azure 应用服务活动</div>
<div class="a" style="left:308px;top:782px;width:109px;height:6px;background:#ccceDB"></div>
<!-- SOLUTION EXPLORER -->
<div class="a" style="left:1034px;top:88px;width:338px;height:667px;border:1px solid #d3d4de;border-bottom:0"></div>
<div id="sol">
<div class="a" style="left:1px;top:72px;width:336px;height:572px;background:#f5f5f5"></div>
<div class="t" style="left:5px;top:10px;font-size:12px;color:#1e1e1e">解决方案资源管理器</div>
<svg style="left:117px;top:8px" width="158" height="5"><defs><pattern id="gp" width="4" height="4" patternUnits="userSpaceOnUse"><rect width="1" height="1" fill="#a8a8b0"/><rect x="2" y="2" width="1" height="1" fill="#a8a8b0"/></pattern></defs><rect width="158" height="5" fill="url(#gp)"/></svg>
<div class="dn" style="left:284px;top:8px;border-width:4px 4px 0 4px;border-top-color:#1e1e1e"></div>
<svg style="left:301px;top:4px" width="10" height="12" viewBox="0 0 10 12"><path d="M3 1 H7 V6.5 M3 1 V6.5 M1 6.5 H9 M5 6.5 V11.5 M6 1 V6.5" stroke="#1e1e1e" stroke-width="1.2" fill="none"/></svg>
<svg style="left:319px;top:6px" width="10" height="10" viewBox="0 0 10 10"><path d="M0.7 0.7 L9.3 9.3 M9.3 0.7 L0.7 9.3" stroke="#1e1e1e" stroke-width="1.5"/></svg>
<svg style="left:9px;top:30px" width="13" height="13" viewBox="0 0 13 13"><circle cx="6.5" cy="6.5" r="6" fill="#cbcbd0"/><path d="M10 6.5 H3.6 M6.2 3.6 L3.3 6.5 L6.2 9.4" fill="none" stroke="#f5f5f5" stroke-width="1.6"/></svg>
<svg style="left:31px;top:30px" width="13" height="13" viewBox="0 0 13 13"><circle cx="6.5" cy="6.5" r="6" fill="#cbcbd0"/><path d="M3 6.5 H9.4 M6.8 3.6 L9.7 6.5 L6.8 9.4" fill="none" stroke="#f5f5f5" stroke-width="1.6"/></svg>
<svg style="left:52px;top:28px" width="15" height="15" viewBox="0 0 15 15"><path d="M7.5 1 L14.5 8 H12.5 V14.5 H9 V10 H6 V14.5 H2.5 V8 H0.5 Z" fill="#2b2b2b"/><path d="M10.5 1.5 H12.5 V5 L10.5 3 Z" fill="#2b2b2b"/><path d="M7.5 3.6 L11 7.2 V13 H10.4 V8.6 H4.6 V13 H4 V7.2 Z" fill="#f5f5f5"/></svg>
<div class="a" style="left:74px;top:27px;width:1px;height:18px;background:#cfd0d8"></div>
<svg style="left:84px;top:28px" width="15" height="16" viewBox="0 0 15 16"><circle cx="8.5" cy="9.5" r="4.6" fill="none" stroke="#2b2b2b" stroke-width="1.3"/><path d="M8.5 6.8 V9.8 H11" fill="none" stroke="#2b2b2b" stroke-width="1.2"/><path d="M0.5 1 H4.5 M2.5 1 V5" stroke="#2b2b2b" stroke-width="1.2"/></svg>
<div class="dn" style="left:104px;top:36px;border-width:3px 3px 0 3px"></div>
<svg style="left:117px;top:29px" width="14" height="14" viewBox="0 0 14 14"><path d="M13 4 H3 M5.5 1 L2.5 4 L5.5 7 M1 10 H11 M8.5 7 L11.5 10 L8.5 13" fill="none" stroke="#2b2b2b" stroke-width="1.6"/></svg>
<svg style="left:140px;top:28px" width="14" height="15" viewBox="0 0 14 15"><path d="M11.2 5 A5 5 0 1 0 12 9" fill="none" stroke="#00539c" stroke-width="2.2"/><path d="M7 0 L13 1.5 L9 6.5 Z" fill="#00539c"/></svg>
<svg style="left:162px;top:29px" width="14" height="14" viewBox="0 0 14 14"><path d="M4.5 4.5 V1 H13 V8 H9.5 M1 4.5 H9.5 V13 H1 Z M1 6.5 H9.5" fill="none" stroke="#2b2b2b" stroke-width="1.3"/></svg>
<svg style="left:183px;top:28px" width="14" height="16" viewBox="0 0 14 16"><path d="M3 3.5 V1 H10 L13 4 V12 H10.5 M1 4 H7.5 L10.5 7 V15 H1 Z" fill="none" stroke="#2b2b2b" stroke-width="1.2"/><path d="M3 8 H8 M3 10.5 H8 M3 13 H8" stroke="#2b2b2b" stroke-width="1"/></svg>
<div class="a" style="left:206px;top:27px;width:1px;height:18px;background:#cfd0d8"></div>
<svg style="left:214px;top:31px" width="13" height="10" viewBox="0 0 13 10"><path d="M4.5 1 L1 5 L4.5 9 M8.5 1 L12 5 L8.5 9" fill="none" stroke="#2b2b2b" stroke-width="1.7"/></svg>
<svg style="left:236px;top:29px" width="14" height="14" viewBox="0 0 14 14"><path d="M1.5 12.5 L7 7" stroke="#2b2b2b" stroke-width="2.6" stroke-linecap="round"/><path d="M12.8 3.2 L10.6 5.2 L8.8 3.4 L10.9 1.3 A3.6 3.6 0 1 0 12.8 3.2 Z" fill="#2b2b2b"/></svg>
<div class="a" style="left:259px;top:35px;width:5px;height:2px;background:#2b2b2b"></div><div class="a" style="left:264px;top:33px;width:7px;height:5px;background:#2b2b2b"></div>
<div class="a" style="left:1px;top:50px;width:336px;height:22px;background:#fff;border:1px solid #dbdde6"></div>
<div class="t" style="left:5px;top:61px;font-size:12px;color:#6d6d6d">搜索解决方案资源管理器(Ctrl+;)</div>
<svg style="left:308px;top:54px" width="13" height="13" viewBox="0 0 13 13"><circle cx="8" cy="5" r="3.4" fill="none" stroke="#555" stroke-width="1.6"/><path d="M5.5 7.5 L1 12" stroke="#555" stroke-width="2"/></svg>
<div class="dn" style="left:327px;top:60px;border-width:3px 3px 0 3px"></div>
<div class="a" style="left:321px;top:78px;width:17px;height:566px;background:#f0f0f2"></div>
<svg style="left:325px;top:83px" width="9" height="6"><path d="M0 5.5 L4.5 0.5 L9 5.5 Z" fill="#85868f"/></svg>
<div class="a" style="left:325px;top:94px;width:9px;height:106px;background:#c2c3c9"></div>
<svg style="left:325px;top:633px" width="9" height="6"><path d="M0 0.5 L4.5 5.5 L9 0.5 Z" fill="#85868f"/></svg>
<div class="a" style="left:0;top:77px;width:321px;height:565px;overflow:hidden">
<div class="tr" style="top:0.5px"><svg style="left:14px;top:2px" width="15" height="15" viewBox="0 0 15 15"><path d="M2.5 5 V1.5 H14 V11.5 H9" fill="none" stroke="#424242" stroke-width="1.3"/><path d="M6.5 5.5 L9 6.6 V13.4 L6.5 14.5 L3 11.3 L1.2 12.7 L0.3 12.2 V7.8 L1.2 7.3 L3 8.7 Z M1.3 8.9 V11.1 L2.4 10 Z M4.3 10 L6.6 11.9 V8.1 Z" fill="#68217a" fill-rule="evenodd"/></svg><span style="position:absolute;left:34px;top:0;font-size:12.4px">解决方案'cymanager' (7 个项目)</span></div>
<div class="tr" style="top:19.5px"><svg style="left:12px;top:5px" width="6" height="10"><path d="M0.6 0.9 L4.6 4.8 L0.6 8.7 Z" fill="none" stroke="#1e1e1e" stroke-width="1.1"/></svg><svg style="left:31px;top:4px" width="14" height="12" viewBox="0 0 14 12"><rect x="0.5" y="0.5" width="13" height="10.5" fill="#f5f5f5" stroke="#388a34"/><text x="2" y="9" font-family="Liberation Sans,sans-serif" font-weight="bold" font-size="8.5" fill="#2b6a2b" letter-spacing="-0.4">C#</text></svg><span style="position:absolute;left:52px;top:0">BLL</span></div>
<div class="tr" style="top:38.5px"><svg style="left:12px;top:5px" width="6" height="10"><path d="M0.6 0.9 L4.6 4.8 L0.6 8.7 Z" fill="none" stroke="#1e1e1e" stroke-width="1.1"/></svg><svg style="left:31px;top:4px" width="14" height="12" viewBox="0 0 14 12"><rect x="0.5" y="0.5" width="13" height="10.5" fill="#f5f5f5" stroke="#388a34"/><text x="2" y="9" font-family="Liberation Sans,sans-serif" font-weight="bold" font-size="8.5" fill="#2b6a2b" letter-spacing="-0.4">C#</text></svg><span style="position:absolute;left:52px;top:0">Common</span></div>
<div class="tr" style="top:57.5px"><svg style="left:12px;top:5px" width="6" height="10"><path d="M0.6 0.9 L4.6 4.8 L0.6 8.7 Z" fill="none" stroke="#1e1e1e" stroke-width="1.1"/></svg><svg style="left:31px;top:4px" width="14" height="12" viewBox="0 0 14 12"><rect x="0.5" y="0.5" width="13" height="10.5" fill="#f5f5f5" stroke="#388a34"/><text x="2" y="9" font-family="Liberation Sans,sans-serif" font-weight="bold" font-size="8.5" fill="#2b6a2b" letter-spacing="-0.4">C#</text></svg><span style="position:absolute;left:52px;top:0">DA</span></div>
<div class="tr" style="top:76.5px"><svg style="left:12px;top:5px" width="6" height="10"><path d="M0.6 0.9 L4.6 4.8 L0.6 8.7 Z" fill="none" stroke="#1e1e1e" stroke-width="1.1"/></svg><svg style="left:31px;top:4px" width="14" height="12" viewBox="0 0 14 12"><rect x="0.5" y="0.5" width="13" height="10.5" fill="#f5f5f5" stroke="#388a34"/><text x="2" y="9" font-family="Liberation Sans,sans-serif" font-weight="bold" font-size="8.5" fill="#2b6a2b" letter-spacing="-0.4">C#</text></svg><span style="position:absolute;left:52px;top:0">E3.AutoUpdater</span></div>
<div class="tr" style="top:95.5px"><svg style="left:11px;top:6.5px" width="7" height="7"><path d="M6.5 0.5 V6.5 H0.5 Z" fill="#1e1e1e"/></svg><svg style="left:31px;top:4px" width="14" height="12" viewBox="0 0 14 12"><rect x="0.5" y="0.5" width="13" height="10.5" fill="#f5f5f5" stroke="#388a34"/><text x="2" y="9" font-family="Liberation Sans,sans-serif" font-weight="bold" font-size="8.5" fill="#2b6a2b" letter-spacing="-0.4">C#</text></svg><span style="position:absolute;left:52px;top:0">E3.CSharpZipLib</span></div>
<div class="tr" style="top:114.5px"><svg style="left:30px;top:5px" width="6" height="10"><path d="M0.6 0.9 L4.6 4.8 L0.6 8.7 Z" fill="none" stroke="#1e1e1e" stroke-width="1.1"/></svg><svg style="left:49px;top:5px" width="15" height="9" viewBox="0 0 15 9"><rect x="1" y="2.2" width="3.6" height="3.8" fill="#424242"/><rect x="4.6" y="3.6" width="4.4" height="1" fill="#8a8a8a"/><rect x="9" y="0.6" width="6" height="6.8" fill="#424242"/></svg><span style="position:absolute;left:70px;top:0">引用</span></div>
<div class="tr" style="top:133.5px"><svg style="left:30px;top:5px" width="6" height="10"><path d="M0.6 0.9 L4.6 4.8 L0.6 8.7 Z" fill="none" stroke="#1e1e1e" stroke-width="1.1"/></svg><svg style="left:49px;top:3.5px" width="15" height="12" viewBox="0 0 15 12"><path d="M2 2 H7 L8.5 0.5 H15 V11.5 H2 Z" fill="#dcb67a"/><path d="M2 3.2 H15 V4 H2 Z" fill="#e6c793"/></svg><span style="position:absolute;left:70px;top:0">BZip2</span></div>
<div class="tr" style="top:152.5px"><svg style="left:30px;top:5px" width="6" height="10"><path d="M0.6 0.9 L4.6 4.8 L0.6 8.7 Z" fill="none" stroke="#1e1e1e" stroke-width="1.1"/></svg><svg style="left:49px;top:3.5px" width="15" height="12" viewBox="0 0 15 12"><path d="M2 2 H7 L8.5 0.5 H15 V11.5 H2 Z" fill="#dcb67a"/><path d="M2 3.2 H15 V4 H2 Z" fill="#e6c793"/></svg><span style="position:absolute;left:70px;top:0">Checksums</span></div>
<div class="tr" style="top:171.5px"><svg style="left:30px;top:5px" width="6" height="10"><path d="M0.6 0.9 L4.6 4.8 L0.6 8.7 Z" fill="none" stroke="#1e1e1e" stroke-width="1.1"/></svg><svg style="left:49px;top:3.5px" width="15" height="12" viewBox="0 0 15 12"><path d="M2 2 H7 L8.5 0.5 H15 V11.5 H2 Z" fill="#dcb67a"/><path d="M2 3.2 H15 V4 H2 Z" fill="#e6c793"/></svg><span style="position:absolute;left:70px;top:0">Core</span></div>
<div class="tr" style="top:190.5px"><svg style="left:30px;top:5px" width="6" height="10"><path d="M0.6 0.9 L4.6 4.8 L0.6 8.7 Z" fill="none" stroke="#1e1e1e" stroke-width="1.1"/></svg><svg style="left:49px;top:3.5px" width="15" height="12" viewBox="0 0 15 12"><path d="M2 2 H7 L8.5 0.5 H15 V11.5 H2 Z" fill="#dcb67a"/><path d="M2 3.2 H15 V4 H2 Z" fill="#e6c793"/></svg><span style="position:absolute;left:70px;top:0">Encryption</span></div>
<div class="tr" style="top:209.5px"><svg style="left:30px;top:5px" width="6" height="10"><path d="M0.6 0.9 L4.6 4.8 L0.6 8.7 Z" fill="none" stroke="#1e1e1e" stroke-width="1.1"/></svg><svg style="left:49px;top:3.5px" width="15" height="12" viewBox="0 0 15 12"><path d="M2 2 H7 L8.5 0.5 H15 V11.5 H2 Z" fill="#dcb67a"/><path d="M2 3.2 H15 V4 H2 Z" fill="#e6c793"/></svg><span style="position:absolute;left:70px;top:0">GZip</span></div>
<div class="tr" style="top:228.5px"><svg style="left:30px;top:5px" width="6" height="10"><path d="M0.6 0.9 L4.6 4.8 L0.6 8.7 Z" fill="none" stroke="#1e1e1e" stroke-width="1.1"/></svg><svg style="left:49px;top:3.5px" width="15" height="12" viewBox="0 0 15 12"><path d="M2 2 H7 L8.5 0.5 H15 V11.5 H2 Z" fill="#dcb67a"/><path d="M2 3.2 H15 V4 H2 Z" fill="#e6c793"/></svg><span style="position:absolute;left:70px;top:0">Tar</span></div>
<div class="tr" style="top:247.5px"><svg style="left:30px;top:5px" width="6" height="10"><path d="M0.6 0.9 L4.6 4.8 L0.6 8.7 Z" fill="none" stroke="#1e1e1e" stroke-width="1.1"/></svg><svg style="left:49px;top:3.5px" width="15" height="12" viewBox="0 0 15 12"><path d="M2 2 H7 L8.5 0.5 H15 V11.5 H2 Z" fill="#dcb67a"/><path d="M2 3.2 H15 V4 H2 Z" fill="#e6c793"/></svg><span style="position:absolute;left:70px;top:0">Zip</span></div>
<div class="tr" style="top:266.5px"><svg style="left:49px;top:3px" width="15" height="13" viewBox="0 0 15 13"><text x="0.5" y="10.5" font-family="Liberation Sans,sans-serif" font-weight="bold" font-size="10.5" fill="#388a34" letter-spacing="-0.5">C#</text></svg><span style="position:absolute;left:70px;top:0">AssemblyInfo.cs</span></div>
<div class="tr" style="top:285.5px"><svg style="left:49px;top:3px" width="15" height="13" viewBox="0 0 15 13"><text x="0.5" y="10.5" font-family="Liberation Sans,sans-serif" font-weight="bold" font-size="10.5" fill="#388a34" letter-spacing="-0.5">C#</text></svg><span style="position:absolute;left:70px;top:0">Main.cs</span></div>
<div class="tr" style="top:304.5px"><svg style="left:30px;top:5px" width="6" height="10"><path d="M0.6 0.9 L4.6 4.8 L0.6 8.7 Z" fill="none" stroke="#1e1e1e" stroke-width="1.1"/></svg><svg style="left:49px;top:3px" width="15" height="13" viewBox="0 0 15 13"><text x="0.5" y="10.5" font-family="Liberation Sans,sans-serif" font-weight="bold" font-size="10.5" fill="#388a34" letter-spacing="-0.5">C#</text></svg><span style="position:absolute;left:70px;top:0">SharpZipBaseException.cs</span></div>
<div class="tr" style="top:323.5px"><svg style="left:11px;top:6.5px" width="7" height="7"><path d="M6.5 0.5 V6.5 H0.5 Z" fill="#1e1e1e"/></svg><svg style="left:31px;top:4px" width="14" height="12" viewBox="0 0 14 12"><rect x="0.5" y="0.5" width="13" height="10.5" fill="#f5f5f5" stroke="#388a34"/><text x="2" y="9" font-family="Liberation Sans,sans-serif" font-weight="bold" font-size="8.5" fill="#2b6a2b" letter-spacing="-0.4">C#</text></svg><span style="position:absolute;left:52px;top:0">E3.Utility</span></div>
<div class="tr" style="top:342.5px"><svg style="left:30px;top:5px" width="6" height="10"><path d="M0.6 0.9 L4.6 4.8 L0.6 8.7 Z" fill="none" stroke="#1e1e1e" stroke-width="1.1"/></svg><svg style="left:49px;top:3px" width="14" height="14" viewBox="0 0 14 14"><path d="M1.5 12.5 L7 7" stroke="#424242" stroke-width="2.6" stroke-linecap="round"/><path d="M12.8 3.2 L10.6 5.2 L8.8 3.4 L10.9 1.3 A3.6 3.6 0 1 0 12.8 3.2 Z" fill="#424242"/></svg><span style="position:absolute;left:70px;top:0">Properties</span></div>
<div class="tr" style="top:361.5px"><svg style="left:30px;top:5px" width="6" height="10"><path d="M0.6 0.9 L4.6 4.8 L0.6 8.7 Z" fill="none" stroke="#1e1e1e" stroke-width="1.1"/></svg><svg style="left:49px;top:5px" width="15" height="9" viewBox="0 0 15 9"><rect x="1" y="2.2" width="3.6" height="3.8" fill="#424242"/><rect x="4.6" y="3.6" width="4.4" height="1" fill="#8a8a8a"/><rect x="9" y="0.6" width="6" height="6.8" fill="#424242"/></svg><span style="position:absolute;left:70px;top:0">引用</span></div>
<div class="tr" style="top:380.5px"><svg style="left:49px;top:3.5px" width="15" height="12" viewBox="0 0 15 12"><path d="M2 2 H7 L8.5 0.5 H15 V11.5 H2 Z" fill="#dcb67a"/><path d="M2 3.2 H15 V4 H2 Z" fill="#e6c793"/></svg><span style="position:absolute;left:70px;top:0">Service References</span></div>
<div class="tr" style="top:399.5px"><svg style="left:30px;top:5px" width="6" height="10"><path d="M0.6 0.9 L4.6 4.8 L0.6 8.7 Z" fill="none" stroke="#1e1e1e" stroke-width="1.1"/></svg><svg style="left:49px;top:3.5px" width="15" height="12" viewBox="0 0 15 12"><path d="M2 2 H7 L8.5 0.5 H15 V11.5 H2 Z" fill="#dcb67a"/><path d="M2 3.2 H15 V4 H2 Z" fill="#e6c793"/></svg><span style="position:absolute;left:70px;top:0">Common</span></div>
<div class="tr" style="top:418.5px"><svg style="left:30px;top:5px" width="6" height="10"><path d="M0.6 0.9 L4.6 4.8 L0.6 8.7 Z" fill="none" stroke="#1e1e1e" stroke-width="1.1"/></svg><svg style="left:49px;top:3px" width="15" height="13" viewBox="0 0 15 13"><text x="0.5" y="10.5" font-family="Liberation Sans,sans-serif" font-weight="bold" font-size="10.5" fill="#388a34" letter-spacing="-0.5">C#</text></svg><span style="position:absolute;left:70px;top:0">clsHotKey.cs</span></div>
<div class="tr" style="top:437.5px"><svg style="left:30px;top:5px" width="6" height="10"><path d="M0.6 0.9 L4.6 4.8 L0.6 8.7 Z" fill="none" stroke="#1e1e1e" stroke-width="1.1"/></svg><svg style="left:49px;top:3px" width="15" height="13" viewBox="0 0 15 13"><text x="0.5" y="10.5" font-family="Liberation Sans,sans-serif" font-weight="bold" font-size="10.5" fill="#388a34" letter-spacing="-0.5">C#</text></svg><span style="position:absolute;left:70px;top:0">clsPrintBarCode.cs</span></div>
<div class="tr" style="top:456.5px"><svg style="left:30px;top:5px" width="6" height="10"><path d="M0.6 0.9 L4.6 4.8 L0.6 8.7 Z" fill="none" stroke="#1e1e1e" stroke-width="1.1"/></svg><svg style="left:49px;top:3px" width="15" height="13" viewBox="0 0 15 13"><text x="0.5" y="10.5" font-family="Liberation Sans,sans-serif" font-weight="bold" font-size="10.5" fill="#388a34" letter-spacing="-0.5">C#</text></svg><span style="position:absolute;left:70px;top:0">clsScanner.cs</span></div>
<div class="tr" style="top:475.5px"><svg style="left:30px;top:5px" width="6" height="10"><path d="M0.6 0.9 L4.6 4.8 L0.6 8.7 Z" fill="none" stroke="#1e1e1e" stroke-width="1.1"/></svg><svg style="left:49px;top:3px" width="15" height="13" viewBox="0 0 15 13"><text x="0.5" y="10.5" font-family="Liberation Sans,sans-serif" font-weight="bold" font-size="10.5" fill="#388a34" letter-spacing="-0.5">C#</text></svg><span style="position:absolute;left:70px;top:0">clsTicketSet.cs</span></div>
<div class="tr" style="top:494.5px"><svg style="left:30px;top:5px" width="6" height="10"><path d="M0.6 0.9 L4.6 4.8 L0.6 8.7 Z" fill="none" stroke="#1e1e1e" stroke-width="1.1"/></svg><svg style="left:49px;top:3px" width="15" height="13" viewBox="0 0 15 13"><text x="0.5" y="10.5" font-family="Liberation Sans,sans-serif" font-weight="bold" font-size="10.5" fill="#388a34" letter-spacing="-0.5">C#</text></svg><span style="position:absolute;left:70px;top:0">PrintService.cs</span></div>
<div class="tr" style="top:513.5px"><svg style="left:30px;top:5px" width="6" height="10"><path d="M0.6 0.9 L4.6 4.8 L0.6 8.7 Z" fill="none" stroke="#1e1e1e" stroke-width="1.1"/></svg><svg style="left:49px;top:3px" width="15" height="13" viewBox="0 0 15 13"><text x="0.5" y="10.5" font-family="Liberation Sans,sans-serif" font-weight="bold" font-size="10.5" fill="#388a34" letter-spacing="-0.5">C#</text></svg><span style="position:absolute;left:70px;top:0">UtilityINI.cs</span></div>
<div class="tr" style="top:532.5px"><svg style="left:30px;top:5px" width="6" height="10"><path d="M0.6 0.9 L4.6 4.8 L0.6 8.7 Z" fill="none" stroke="#1e1e1e" stroke-width="1.1"/></svg><svg style="left:49px;top:3px" width="15" height="13" viewBox="0 0 15 13"><text x="0.5" y="10.5" font-family="Liberation Sans,sans-serif" font-weight="bold" font-size="10.5" fill="#388a34" letter-spacing="-0.5">C#</text></svg><span style="position:absolute;left:70px;top:0">UtilityMethod.cs</span></div>
<div class="tr" style="top:551.5px"><svg style="left:30px;top:5px" width="6" height="10"><path d="M0.6 0.9 L4.6 4.8 L0.6 8.7 Z" fill="none" stroke="#1e1e1e" stroke-width="1.1"/></svg><svg style="left:49px;top:3px" width="15" height="13" viewBox="0 0 15 13"><text x="0.5" y="10.5" font-family="Liberation Sans,sans-serif" font-weight="bold" font-size="10.5" fill="#388a34" letter-spacing="-0.5">C#</text></svg><span style="position:absolute;left:70px;top:0">UtilityXML.cs</span></div>
</div>
</div>
<div class="a" style="left:1035px;top:734px;width:119px;height:21px;background:#f5f5f5"></div>
<div class="a" style="left:1034px;top:755px;width:338px;height:1px;background:#d3d4de"></div>
<div class="a" style="left:1027px;top:111px;width:1px;height:645px;background:#d3d4de"></div>
<div class="a" style="left:1028px;top:111px;width:6px;height:645px;background:#f3f3f7"></div>
<div class="t" style="left:1040px;top:745px;font-size:12px;color:#0e70c0">解决方案资源管理器</div>
<div class="t" style="left:1159px;top:746px;font-size:12px;color:#444">团队资源管理器</div>
<div class="t" style="left:1252px;top:746px;font-size:12px;color:#444">类视图</div>
<!-- RIGHT STRIP -->
<div class="a" style="left:1398px;top:88px;width:6px;height:48px;background:#ccceDB"></div>
<div class="a" style="left:1398px;top:148px;width:6px;height:24px;background:#ccceDB"></div>
<div class="a vt" style="left:1380px;top:88px">诊断工具</div>
<div class="a vt" style="left:1380px;top:148px">属性</div>
<!-- WATERMARK -->
<svg role="img" aria-label="头条 @芯知社区" style="left:1117px;top:754px" width="263.485" height="35" viewBox="0 -440 3764.07 500"><title>头条 @芯知社区</title><g transform="translate(14.2857 14.2857)" fill="#111"><text class="gw" x="0" y="0" letter-spacing="18.57" transform="translate(30 0) skewX(-11)">头条</text><text class="gw" x="1167.71" y="0">@</text><text class="gw" x="1689.79" y="0" letter-spacing="18.57">芯知社区</text></g><g transform="translate(28.5714 28.5714)" fill="#111"><text class="gw" x="0" y="0" letter-spacing="18.57" transform="translate(30 0) skewX(-11)">头条</text><text class="gw" x="1167.71" y="0">@</text><text class="gw" x="1689.79" y="0" letter-spacing="18.57">芯知社区</text></g><g fill="#fdfdfd"><text class="gw" x="0" y="0" letter-spacing="18.57" transform="translate(30 0) skewX(-11)">头条</text><text class="gw" x="1167.71" y="0">@</text><text class="gw" x="1689.79" y="0" letter-spacing="18.57">芯知社区</text></g></svg>
<!-- STATUS BAR -->
<div class="a" style="left:0;top:788px;width:1404px;height:25px;background:#007acc"></div>
<div class="t" style="left:4px;top:801px;color:#fff;font-size:12px">就绪</div>
<svg style="left:1313px;top:795px" width="9" height="11" viewBox="0 0 9 11"><path d="M4.5 1 V11 M0.8 4.8 L4.5 1 L8.2 4.8" fill="none" stroke="#fff" stroke-width="1.6"/></svg>
<div class="t" style="left:1333px;top:801px;color:#fff;font-size:12px">发布</div>
<svg style="left:1363px;top:798px" width="8" height="5"><path d="M0 5 L4 0 L8 5 Z" fill="#fff"/></svg>
<svg style="left:1391px;top:801px" width="10" height="10"><g fill="#5fa8dd"><rect x="8" y="0" width="1" height="1"/><rect x="6" y="2" width="1" height="1"/><rect x="8" y="2" width="1" height="1"/><rect x="4" y="4" width="1" height="1"/><rect x="6" y="4" width="1" height="1"/><rect x="8" y="4" width="1" height="1"/><rect x="2" y="6" width="1" height="1"/><rect x="4" y="6" width="1" height="1"/><rect x="6" y="6" width="1" height="1"/><rect x="8" y="6" width="1" height="1"/></g></svg>
</body>
</html>
